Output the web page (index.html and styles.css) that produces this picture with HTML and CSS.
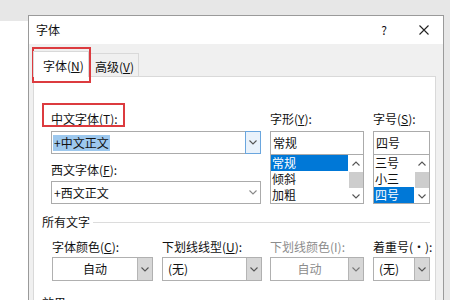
FILE: index.html
```html
<!DOCTYPE html>
<html lang="zh-CN">
<head>
<meta charset="utf-8">
<title>字体</title>
<link rel="stylesheet" href="styles.css">
</head>
<body>
<div class="topband"></div>
<div class="stage">
  <div class="gutter"></div>
  <div class="dialog">
    <div class="titlebar">
      <span class="title">字体</span>
      <span class="help">?</span>
      <span class="close"><svg width="10" height="10" viewBox="0 0 10 10"><path d="M0.5 0.5 L9.5 9.5 M9.5 0.5 L0.5 9.5" stroke="#222" stroke-width="1.1" fill="none"/></svg></span>
    </div>
    <div class="dbody">
      <div class="tabs">
        <div class="tab active">字体(<u>N</u>)</div>
        <div class="tab">高级(<u>V</u>)</div>
      </div>
      <div class="panel">
        <div class="fontrow">
          <div class="col c1">
            <div class="lbl">中文字体(<u>T</u>):</div>
            <div class="combo focus first"><span class="val"><span class="sel">+中文正文</span></span><span class="btn"><svg width="8" height="5" viewBox="0 0 8 5"><path d="M0.5 0.5 L4 4 L7.5 0.5" stroke="#555" stroke-width="1.1" fill="none"/></svg></span></div>
            <div class="lbl second">西文字体(<u>F</u>):</div>
            <div class="combo third"><span class="val">+西文正文</span><span class="btn"><svg width="8" height="5" viewBox="0 0 8 5"><path d="M0.5 0.5 L4 4 L7.5 0.5" stroke="#888" stroke-width="1.1" fill="none"/></svg></span></div>
          </div>
          <div class="col c2">
            <div class="lbl">字形(<u>Y</u>):</div>
            <div class="edit">常规</div>
            <div class="list">
              <div class="items">
                <div class="item on">常规</div>
                <div class="item">倾斜</div>
                <div class="item">加粗</div>
              </div>
              <div class="sb">
                <div class="up"><svg width="8" height="5" viewBox="0 0 8 5"><path d="M0.5 4.5 L4 1 L7.5 4.5" stroke="#555" stroke-width="1.1" fill="none"/></svg></div>
                <div class="thumb"></div>
                <div class="track"></div>
                <div class="down"><svg width="8" height="5" viewBox="0 0 8 5"><path d="M0.5 0.5 L4 4 L7.5 0.5" stroke="#555" stroke-width="1.1" fill="none"/></svg></div>
              </div>
            </div>
          </div>
          <div class="col c3">
            <div class="lbl">字号(<u>S</u>):</div>
            <div class="edit">四号</div>
            <div class="list">
              <div class="items">
                <div class="item">三号</div>
                <div class="item">小三</div>
                <div class="item on">四号</div>
              </div>
              <div class="sb">
                <div class="up"><svg width="8" height="5" viewBox="0 0 8 5"><path d="M0.5 4.5 L4 1 L7.5 4.5" stroke="#555" stroke-width="1.1" fill="none"/></svg></div>
                <div class="thumb"></div>
                <div class="track"></div>
                <div class="down"><svg width="8" height="5" viewBox="0 0 8 5"><path d="M0.5 0.5 L4 4 L7.5 0.5" stroke="#555" stroke-width="1.1" fill="none"/></svg></div>
              </div>
            </div>
          </div>
        </div>

        <div class="group"><span>所有文字</span><i class="rule"></i></div>

        <div class="row2">
          <div class="cell ca">
            <div class="lbl">字体颜色(<u>C</u>):</div>
            <div class="drop"><span class="dv center">自动</span><span class="dbtn"><svg width="8" height="5" viewBox="0 0 8 5"><path d="M0.5 0.5 L4 4 L7.5 0.5" stroke="#555" stroke-width="1.1" fill="none"/></svg></span></div>
          </div>
          <div class="cell cb">
            <div class="lbl">下划线线型(<u>U</u>):</div>
            <div class="drop"><span class="dv">(无)</span><span class="dbtn"><svg width="8" height="5" viewBox="0 0 8 5"><path d="M0.5 0.5 L4 4 L7.5 0.5" stroke="#555" stroke-width="1.1" fill="none"/></svg></span></div>
          </div>
          <div class="cell cc">
            <div class="lbl dis">下划线颜色(I):</div>
            <div class="drop"><span class="dv center dis">自动</span><span class="dbtn"><svg width="8" height="5" viewBox="0 0 8 5"><path d="M0.5 0.5 L4 4 L7.5 0.5" stroke="#777" stroke-width="1.1" fill="none"/></svg></span></div>
          </div>
          <div class="cell cd">
            <div class="lbl">着重号(·):</div>
            <div class="drop"><span class="dv">(无)</span><span class="dbtn"><svg width="8" height="5" viewBox="0 0 8 5"><path d="M0.5 0.5 L4 4 L7.5 0.5" stroke="#555" stroke-width="1.1" fill="none"/></svg></span></div>
          </div>
        </div>

        <div class="group last"><span>效果</span></div>
      </div>
    </div>
  </div>
  <div class="rgutter"></div>
</div>
<div class="mark m1"></div>
<div class="mark m2"></div>
</body>
</html>
```
FILE: styles.css
```css
* { box-sizing: border-box; margin: 0; padding: 0; }
html, body { width: 450px; height: 300px; overflow: hidden; }
body {
  background: #fff;
  font-family: "Noto Sans CJK SC", "Noto Sans", sans-serif;
  font-size: 12px;
  line-height: 16px;
  color: #111;
  position: relative;
}
u { text-decoration: underline; text-underline-offset: 1px; }

.topband { height: 15px; background: #e7e7e7; }
.stage { display: flex; height: 285px; }
.gutter { width: 28px; background: linear-gradient(#e7e7e7 0 6px, #fff 6px); }
.rgutter { flex: 1; background: #e7e7e7; }

.dialog {
  width: 416px;
  border: 1px solid #9a9a9a;
  border-bottom: none;
  background: #f0f0f0;
  display: flex;
  flex-direction: column;
}

.titlebar {
  height: 28px;
  background: #fff;
  display: flex;
  align-items: center;
  padding-left: 7px;
  padding-right: 4px;
  flex: none;
}
.title { flex: 1; }
.help { width: 20px; text-align: center; margin-right: 15px; }
.close { width: 30px; display: flex; justify-content: center; align-items: center; }

.dbody { padding: 7px 7px 0 4px; flex: 1; display: flex; flex-direction: column; }

.tabs { display: flex; align-items: flex-end; height: 25px; flex: none; }
.tab {
  border: 1px solid #d9d9d9;
  border-bottom: none;
  display: flex;
  align-items: center;
}
.tab.active {
  width: 56px;
  height: 26px;
  margin-bottom: -1px;
  padding: 3px 0 0 9px;
  background: #fff;
  position: relative;
  z-index: 1;
}
.tab:not(.active) {
  width: 50px;
  height: 23px;
  padding: 4px 0 0 6px;
  border-left: none;
}

.panel {
  flex: 1;
  background: #fff;
  border: 1px solid #d9d9d9;
  border-bottom: none;
  padding: 34px 5px 0 8px;
}

.fontrow { display: flex; padding-left: 9px; }
.col { display: flex; flex-direction: column; }
.c1 { width: 210px; }
.c2 { width: 94px; margin-left: 9px; }
.c3 { width: 57px; margin-left: 9px; }

.lbl { height: 16px; white-space: nowrap; }
.lbl.dis { color: #8c8c8c; }

.combo {
  height: 23px;
  border: 1px solid #ababab;
  display: flex;
  margin-top: 4px;
}
.combo.third { margin-top: 3px; }
.lbl.second { margin-top: 8px; }
.combo .val { flex: 1; display: flex; align-items: center; padding-left: 2px; }
.combo .sel { background: #9dc8ee; padding: 0 1px; margin-left: -1px; }
.combo .btn { width: 15px; display: flex; align-items: center; justify-content: center; }
.combo.focus .btn {
  margin: -1px -1px -1px 0;
  width: 16px;
  border: 1px solid #6aa6de;
  background: #e9f2fb;
}

.edit {
  margin-top: 4px;
  height: 24px;
  border: 1px solid #ababab;
  padding-left: 2px;
  display: flex;
  align-items: center;
}
.list {
  height: 49px;
  border: 1px solid #ababab;
  border-top: none;
  display: flex;
}
.items { flex: 1; }
.item { height: 16px; padding-left: 1px; }
.item.on { background: #0078d7; color: #fff; margin-right: 1px; }
.sb { width: 14px; display: flex; flex-direction: column; }
.sb .up { height: 16px; display: flex; align-items: center; justify-content: center; }
.sb .thumb { height: 16px; margin-top: 1px; background: #cdcdcd; }
.sb .track { flex: 1; }
.sb .down { height: 13px; display: flex; align-items: center; justify-content: center; }

.group { display: flex; align-items: center; margin-top: 10px; height: 16px; }
.group .rule { flex: 1; height: 1px; background: #dcdcdc; margin-left: 3px; }
.group.last { margin-top: 14px; }

.row2 { display: flex; padding-left: 10px; margin-top: 9px; }
.cell { display: flex; flex-direction: column; }
.ca { width: 101px; }
.cb { width: 100px; margin-left: 9px; }
.cc { width: 94px; margin-left: 8px; }
.cd { width: 57px; margin-left: 9px; }
.drop {
  margin-top: 2px;
  height: 24px;
  border: 1px solid #b0b0b0;
  display: flex;
}
.drop .dv { flex: 1; display: flex; align-items: center; padding-left: 5px; }
.drop .dv.center { justify-content: center; padding-left: 0; }
.drop .dv.dis { color: #8c8c8c; }
.drop .dbtn {
  width: 15px;
  background: #d7d7d7;
  border-left: 1px solid #b5b5b5;
  display: flex;
  align-items: center;
  justify-content: center;
}

.mark { position: absolute; border: 2px solid #dc3b3f; }
.m1 { left: 32px; top: 47px; width: 59px; height: 36px; }
.m2 { left: 42px; top: 103px; width: 83px; height: 24px; }
```
